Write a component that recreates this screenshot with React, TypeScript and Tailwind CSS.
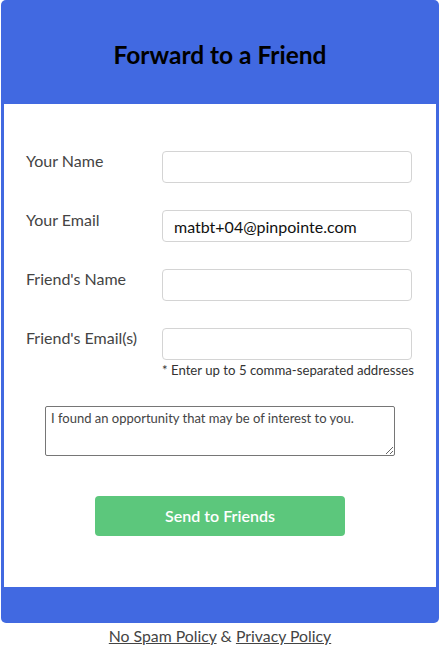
import { useState } from "react"

interface Field {
  label: string
  value: string
  hint?: string
}

const fields: Field[] = [
  { label: "Your Name", value: "" },
  { label: "Your Email", value: "matbt+04@pinpointe.com" },
  { label: "Friend's Name", value: "" },
  { label: "Friend's Email(s)", value: "", hint: "* Enter up to 5 comma-separated addresses" },
]

export default function App() {
  const [values, setValues] = useState(fields.map((f) => f.value))
  const [message, setMessage] = useState("I found an opportunity that may be of interest to you.")

  return (
    <div className="min-h-screen bg-white font-['Lato','Liberation_Sans',sans-serif]">
      <div className="mx-auto w-[438px] rounded-[5px] bg-[#4169e1] px-[3px]">
        {/* Header */}
        <div className="flex h-[104px] items-center justify-center pt-[7px]">
          <h1 className="text-[24.5px] font-bold text-black">Forward to a Friend</h1>
        </div>

        {/* Form body */}
        <div className="bg-white pl-[22px] pr-[24px] pt-[47px] pb-[51px]">
          <div className="flex flex-col gap-[27px]">
            {fields.map((f, i) => (
              <div key={f.label} className="flex">
                <label className="w-[136px] shrink-0 text-[16px] leading-[20px] text-[#444]">{f.label}</label>
                <div className="flex w-[250px] shrink-0 flex-col">
                  <input
                    type="text"
                    value={values[i]}
                    onChange={(e) => setValues((prev) => prev.map((v, j) => (j === i ? e.target.value : v)))}
                    className="h-[32px] w-[250px] rounded-[4px] border border-[#d4d4d4] px-[11px] text-[16px] text-[#111] outline-none"
                  />
                  {f.hint && (
                    <span className="mt-[2px] whitespace-nowrap text-[13.2px] leading-[17px] text-[#333]">{f.hint}</span>
                  )}
                </div>
              </div>
            ))}
          </div>

          <div className="mt-[27px] flex justify-center pl-[2px]">
            <textarea
              value={message}
              onChange={(e) => setMessage(e.target.value)}
              className="h-[50px] w-[350px] rounded-[2px] border border-[#767676] px-[5px] py-[3px] text-[13px] leading-[17px] text-[#444] outline-none"
            />
          </div>

          <div className="mt-[40px] flex justify-center pl-[2px]">
            <button className="h-[40px] w-[250px] rounded-[4px] bg-[#5cc77c] text-[16px] font-semibold text-white">
              Send to Friends
            </button>
          </div>
        </div>

        <div className="h-[36px]" />
      </div>

      {/* Footer links */}
      <p className="mt-[2px] text-center text-[15.8px] leading-[22px] text-[#444]">
        <a href="#" className="underline">No Spam Policy</a> &amp; <a href="#" className="underline">Privacy Policy</a>
      </p>
    </div>
  )
}
